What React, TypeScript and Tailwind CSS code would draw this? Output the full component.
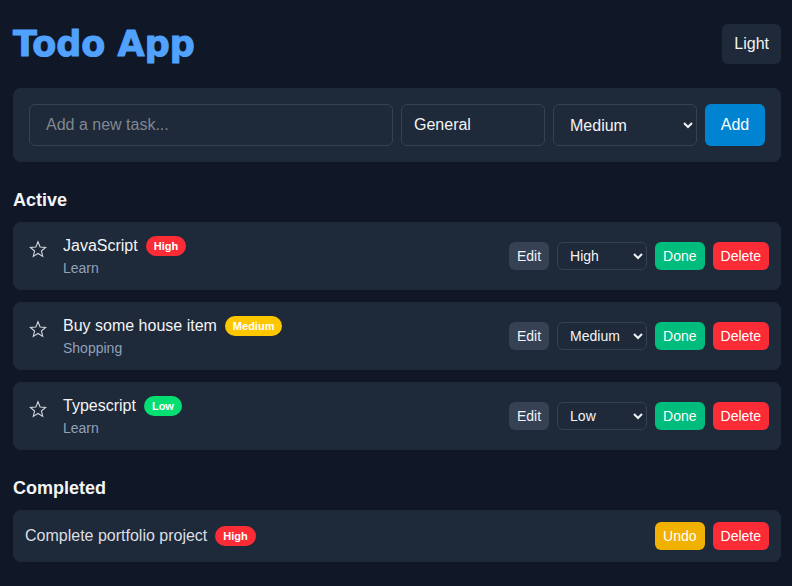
import { useState } from "react";

type Priority = "High" | "Medium" | "Low";
type Task = { id: number; title: string; category: string; priority: Priority };

const badgeColors: Record<Priority, string> = {
  High: "bg-[#fb2c36]",
  Medium: "bg-[#fdc700]",
  Low: "bg-[#05df72]",
};

const initialTasks: Task[] = [
  { id: 1, title: "JavaScript", category: "Learn", priority: "High" },
  { id: 2, title: "Buy some house item", category: "Shopping", priority: "Medium" },
  { id: 3, title: "Typescript", category: "Learn", priority: "Low" },
];

function Badge({ priority }: { priority: Priority }) {
  return (
    <span className={`rounded-full px-2 py-0.5 text-[11px] leading-4 font-semibold text-white ${badgeColors[priority]}`}>
      {priority}
    </span>
  );
}

function StarIcon() {
  return (
    <svg viewBox="0 0 18 18" className="size-[18px]" fill="none" stroke="currentColor" strokeWidth="1.1" aria-hidden="true">
      <path d="M9 1.8 L11.1 7 L16.6 7.4 L12.4 11 L13.7 16.4 L9 13.5 L4.3 16.4 L5.6 11 L1.4 7.4 L6.9 7 Z" />
    </svg>
  );
}

function PriorityOptions() {
  return (
    <>
      <option>Low</option>
      <option>Medium</option>
      <option>High</option>
    </>
  );
}

function TaskRow({ task }: { task: Task }) {
  const [priority, setPriority] = useState<Priority>(task.priority);
  return (
    <li className="flex items-center justify-between rounded-lg bg-[#1e2939] p-3">
      <div className="flex items-start gap-3">
        <button aria-label="Star task" className="px-1 pt-1.5 text-[#d1d5dc]">
          <StarIcon />
        </button>
        <div>
          <div className="flex items-center gap-2">
            <span>{task.title}</span>
            <Badge priority={priority} />
          </div>
          <div className="text-sm text-[#90a1b9]">{task.category}</div>
        </div>
      </div>
      <div className="flex items-center gap-2 text-sm">
        <button className="rounded-md bg-[#364153] px-2 py-1">Edit</button>
        <select
          aria-label={`Priority of ${task.title}`}
          value={priority}
          onChange={(e) => setPriority(e.target.value as Priority)}
          className="h-7 w-[90px] rounded-md border border-[#364153] bg-[#1e2939] px-2"
        >
          <PriorityOptions />
        </select>
        <button className="rounded-md bg-[#00bc7d] px-2 py-1 text-white">Done</button>
        <button className="rounded-md bg-[#fb2c36] px-2 py-1 text-white">Delete</button>
      </div>
    </li>
  );
}

export default function App() {
  return (
    <div className="min-h-screen bg-[#101828] py-6 pr-[11px] pl-[13px] font-['Liberation_Sans',Arial,sans-serif] text-[#f3f4f6]">
      <header className="mb-6 flex items-center justify-between">
        <h1 className="font-['DejaVu_Sans',sans-serif] text-[35px] leading-10 font-black text-[#51a2ff] [-webkit-text-stroke:1px_#51a2ff]">
          Todo App
        </h1>
        <button className="rounded-md bg-[#1e2939] px-3 py-2">Light</button>
      </header>
      <form className="mb-6 flex gap-2 rounded-lg bg-[#1e2939] p-4" onSubmit={(e) => e.preventDefault()}>
        <input
          aria-label="New task"
          placeholder="Add a new task..."
          className="min-w-0 flex-1 rounded-md border border-[#364153] px-4 py-2 placeholder:text-[#808791]"
        />
        <input aria-label="Category" defaultValue="General" className="w-36 rounded-md border border-[#364153] px-3 py-2" />
        <select
          aria-label="Priority"
          defaultValue="Medium"
          className="w-36 rounded-md border border-[#364153] bg-[#1e2939] px-3 py-2"
        >
          <PriorityOptions />
        </select>
        <button className="w-15 rounded-md bg-[#0084d1] py-2 text-white">Add</button>
      </form>
      <main>
        <section className="mb-6">
          <h2 className="mb-2 text-lg font-semibold">Active</h2>
          <ul className="space-y-3">
            {initialTasks.map((task) => (
              <TaskRow key={task.id} task={task} />
            ))}
          </ul>
        </section>
        <section>
          <h2 className="mb-2 text-lg font-semibold">Completed</h2>
          <ul>
            <li className="flex items-center justify-between rounded-lg bg-[#1e2939] p-3">
              <div className="flex items-center gap-2">
                <span className="text-[#dcdfe4]">Complete portfolio project</span>
                <Badge priority="High" />
              </div>
              <div className="flex gap-2 text-sm text-white">
                <button className="rounded-md bg-[#f0b100] px-2 py-1">Undo</button>
                <button className="rounded-md bg-[#fb2c36] px-2 py-1">Delete</button>
              </div>
            </li>
          </ul>
        </section>
      </main>
    </div>
  );
}
